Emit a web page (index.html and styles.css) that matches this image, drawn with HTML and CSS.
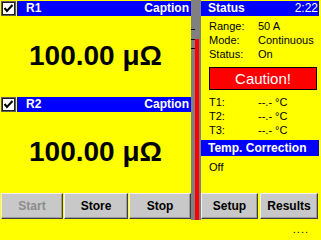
FILE: index.html
```html
<!DOCTYPE html>
<html>
<head>
<meta charset="utf-8">
<link rel="stylesheet" href="styles.css">
</head>
<body>
<div class="screen">
  <div class="main">
    <div class="left">
      <section class="channel">
        <div class="chan-row">
          <span class="check"><svg width="15" height="15" viewBox="0 0 15 15"><rect x="0.5" y="0.5" width="14" height="14" fill="#fff" stroke="#606060"/><rect x="1.5" y="1.5" width="12" height="12" fill="none" stroke="#202020"/><polyline points="3.5,7 6,10 11.5,4" fill="none" stroke="#000" stroke-width="2"/></svg></span>
          <div class="chan-head"><span class="chan-name">R1</span><span>Caption</span></div>
        </div>
        <div class="chan-value">100.00 μΩ</div>
      </section>
      <section class="channel">
        <div class="chan-row">
          <span class="check"><svg width="15" height="15" viewBox="0 0 15 15"><rect x="0.5" y="0.5" width="14" height="14" fill="#fff" stroke="#606060"/><rect x="1.5" y="1.5" width="12" height="12" fill="none" stroke="#202020"/><polyline points="3.5,7 6,10 11.5,4" fill="none" stroke="#000" stroke-width="2"/></svg></span>
          <div class="chan-head"><span class="chan-name">R2</span><span>Caption</span></div>
        </div>
        <div class="chan-value">100.00 μΩ</div>
      </section>
      <div class="btns left-btns">
        <button class="btn disabled">Start</button>
        <button class="btn">Store</button>
        <button class="btn">Stop</button>
      </div>
    </div>
    <div class="gauge">
      <svg width="10" height="220" viewBox="0 0 10 220"><rect x="0" y="0" width="10" height="220" fill="#808080"/><rect x="4" y="39" width="4" height="181" fill="#ff0000"/><rect x="0" y="29" width="4" height="1" fill="#000"/><rect x="0" y="39" width="4" height="1" fill="#000"/><rect x="0" y="48" width="4" height="1" fill="#000"/></svg>
    </div>
    <div class="right">
      <div class="panel-head"><span class="bold">Status</span><span>2:22</span></div>
      <div class="info">
        <span>Range:</span><span>50 A</span>
        <span>Mode:</span><span>Continuous</span>
        <span>Status:</span><span>On</span>
      </div>
      <div class="caution">Caution!</div>
      <div class="info temps">
        <span>T1:</span><span>--.- °C</span>
        <span>T2:</span><span>--.- °C</span>
        <span>T3:</span><span>--.- °C</span>
      </div>
      <div class="panel-head sub"><span class="bold">Temp. Correction</span></div>
      <div class="off">Off</div>
      <div class="btns right-btns">
        <button class="btn">Setup</button>
        <button class="btn">Results</button>
      </div>
    </div>
  </div>
  <div class="footer">....</div>
</div>
</body>
</html>
```
FILE: styles.css
```css
* { box-sizing: border-box; }
html, body { margin: 0; padding: 0; }
body {
  background: #ffff00;
  font-family: "Liberation Sans", Arial, sans-serif;
  color: #000;
}
.screen {
  width: 321px;
  height: 240px;
  display: flex;
  flex-direction: column;
  background: #ffff00;
}
.main {
  height: 220px;
  display: grid;
  grid-template-columns: 191px 10px 120px;
}
.left {
  display: flex;
  flex-direction: column;
  padding-top: 1px;
}
.channel {
  height: 96px;
  display: flex;
  flex-direction: column;
}
.chan-row {
  display: flex;
  height: 15px;
  padding-left: 1px;
}
.check {
  width: 15px;
  height: 15px;
  display: block;
}
.check svg { display: block; }
.chan-head {
  flex: 1;
  margin-left: 1px;
  background: #0000ff;
  color: #fff;
  font-weight: bold;
  font-size: 12px;
  line-height: 15px;
  display: flex;
  justify-content: space-between;
  padding: 0 2px 0 9px;
}
.chan-value {
  flex: 1;
  display: flex;
  align-items: center;
  justify-content: center;
  font-weight: bold;
  font-size: 28px;
  padding-bottom: 2px;
}
.btns {
  display: grid;
  height: 26px;
}
.left-btns {
  grid-template-columns: 62px 64px 62px;
  column-gap: 1px;
  padding-left: 1px;
}
.btn {
  margin: 0;
  padding: 0;
  background: #c8c8c8;
  border: 1px solid;
  border-color: #efefef #404040 #404040 #efefef;
  box-shadow: inset -1px -1px 0 #9a9a9a;
  font-family: "Liberation Sans", Arial, sans-serif;
  font-weight: bold;
  font-size: 12px;
  color: #000;
}
.btn.disabled { color: #8c8c8c; }
.gauge svg { display: block; }
.right {
  display: flex;
  flex-direction: column;
  padding-top: 1px;
}
.panel-head {
  height: 15px;
  margin-right: 2px;
  background: #0000ff;
  color: #fff;
  font-size: 12px;
  line-height: 15px;
  display: flex;
  justify-content: space-between;
  padding: 0 1px 0 7px;
}
.panel-head.sub {
  height: 16px;
  line-height: 16px;
  margin-top: 3px;
}
.bold { font-weight: bold; }
.info {
  display: grid;
  grid-template-columns: 49px 1fr;
  font-size: 11px;
  line-height: 14px;
  padding: 3px 0 0 8px;
}
.info.temps { padding-top: 5px; }
.caution {
  margin: 6px 4px 0 8px;
  height: 23px;
  background: #ff0000;
  border: 1px solid #000;
  color: #fff;
  font-size: 15px;
  line-height: 21px;
  text-align: center;
}
.off {
  font-size: 11px;
  line-height: 14px;
  padding: 4px 0 0 8px;
}
.right-btns {
  margin-top: auto;
  margin-bottom: 1px;
  grid-template-columns: 57px 58px;
  column-gap: 2px;
}
.footer {
  flex: 1;
  display: flex;
  justify-content: flex-end;
  font-size: 11px;
  line-height: 14px;
  letter-spacing: 1px;
  padding: 2px 12px 0 0;
}
```
